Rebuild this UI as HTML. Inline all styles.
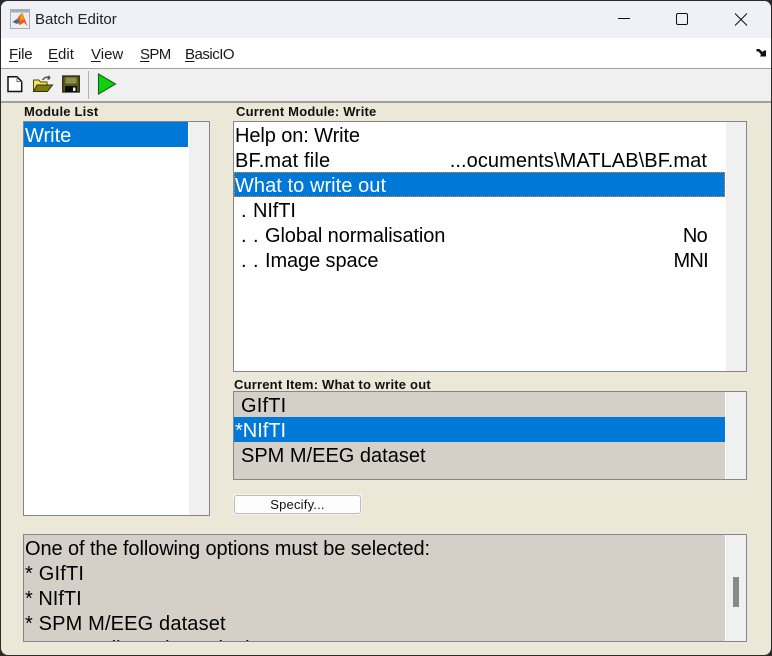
<!DOCTYPE html>
<html><head><meta charset="utf-8"><style>
html,body{margin:0;padding:0;background:#2b2b2b}
#w{position:relative;width:772px;height:656px;overflow:hidden;background:#2b2b2b;font-family:"Liberation Sans",sans-serif}
#i{position:absolute;left:1px;top:1px;width:770px;height:654px;border-radius:7px;overflow:hidden;background:#ebe8d8}
.a{position:absolute}
.t{position:absolute;white-space:pre;font-size:20px;line-height:25px;color:#000}
.m{position:absolute;white-space:pre;font-size:15px;line-height:20px;color:#1a1a1a}
.m u{text-decoration-thickness:1px;text-underline-offset:2px}
.l{position:absolute;white-space:pre;font-size:13px;font-weight:bold;line-height:15px;color:#111}
.b{position:absolute;box-sizing:border-box;border:1px solid #85858f}
</style></head><body><div id="w"><div id="i">
<div class="a" style="left:-1px;top:-1px;width:772px;height:39px;background:#eff1f7"></div>
<div class="a" style="left:-1px;top:37px;width:772px;height:30px;background:#fff"></div>
<div class="a" style="left:-1px;top:67px;width:772px;height:1px;background:#a0a0a0"></div>
<div class="a" style="left:-1px;top:68px;width:772px;height:32px;background:#f0f0f0"></div>
<div class="a" style="left:-1px;top:100px;width:772px;height:2px;background:#a0a0a0"></div>
</div>
<!-- title -->
<svg class="a" style="left:10px;top:9px" width="20" height="20" viewBox="0 0 20 20">
<rect x="0.5" y="0.5" width="19" height="19" fill="#eceef2" stroke="#a9adb5"/>
<rect x="1" y="1" width="18" height="2.5" fill="#9fb0c4"/>
<path d="M2.5 13 L7 10 L10.5 5 L12.5 4 L17.5 17 L14 13.5 L10 16 L7 13.5 Z" fill="#e2611c"/>
<path d="M2.5 13 L7 10 L9.5 12 L7 15 Z" fill="#2f6fa8"/>
<path d="M10.5 5 L12.5 4 L14.5 10 L10 12 Z" fill="#f09a22"/>
</svg>
<div class="a" style="left:35px;top:10px;font-size:15px;line-height:20px;color:#222;white-space:pre">Batch Editor</div>
<div class="a" style="left:618px;top:18px;width:12px;height:1px;background:#111"></div>
<div class="a" style="left:676px;top:13px;width:12px;height:12px;box-sizing:border-box;border:1px solid #111;border-radius:2px"></div>
<svg class="a" style="left:734px;top:13px" width="14" height="13" viewBox="0 0 14 13"><path d="M1 0.5 L13 12.5 M13 0.5 L1 12.5" stroke="#111" stroke-width="1" fill="none"/></svg>
<!-- menu -->
<div class="m" style="left:9px;top:45px;letter-spacing:-.2px"><u>F</u>ile</div>
<div class="m" style="left:48px;top:45px"><u>E</u>dit</div>
<div class="m" style="left:91px;top:45px"><u>V</u>iew</div>
<div class="m" style="left:140px;top:45px;letter-spacing:-.6px"><u>S</u>PM</div>
<div class="m" style="left:185px;top:45px;letter-spacing:-.5px"><u>B</u>asicIO</div>
<svg class="a" style="left:756px;top:48px" width="11" height="10" viewBox="0 0 11 10"><path d="M0.5 1 H3.5 L6.5 4 L8 2.5 L10 2.5 V8.5 H4 L5 6.5 L2.5 3.5 H0.5Z" fill="#111"/></svg>
<!-- toolbar -->
<svg class="a" style="left:6px;top:75px" width="18" height="18" viewBox="0 0 18 18"><path d="M2 1.8 H11 L15.7 6.5 V16.5 H2 Z" fill="#fff" stroke="#111" stroke-width="1.5"/><path d="M11 2 V6.5 H15.5" fill="none" stroke="#777"/></svg>
<svg class="a" style="left:32px;top:75px" width="22" height="18" viewBox="0 0 22 18"><path d="M1.5 5 H7 L8.5 7 H15 V16.5 H1.5 Z" fill="#f4e45c" stroke="#4a4a10"/><path d="M1.5 16.5 L5 10 H20.5 L15.5 16.5 Z" fill="#7e7a10" stroke="#33330a"/><path d="M10.5 5 Q14 0.5 18 3 M18 3 L16.5 0.8 M18 3 L15.5 4.5" stroke="#555" stroke-width="1.5" fill="none"/></svg>
<svg class="a" style="left:62px;top:75px" width="18" height="18" viewBox="0 0 18 18"><rect x="0.7" y="1" width="16.6" height="16" fill="#5a5a16" stroke="#2a2a10" stroke-width="1.3"/><rect x="3.5" y="2.5" width="11" height="6" fill="#8e8e50"/><rect x="3" y="11" width="12" height="6" fill="#0c0c0c"/><rect x="11" y="12.5" width="2.5" height="3.5" fill="#eee"/></svg>
<div class="a" style="left:88px;top:71px;width:1px;height:28px;background:#b0b0b0"></div>
<svg class="a" style="left:97px;top:73px" width="20" height="22" viewBox="0 0 20 22"><path d="M1.5 1 L18.5 11 L1.5 21 Z" fill="#0fd20f" stroke="#146414" stroke-width="1.1"/></svg>
<!-- labels -->
<div class="l" style="left:24px;top:104px;letter-spacing:.2px">Module List</div>
<div class="l" style="left:236px;top:104px;letter-spacing:.2px">Current Module: Write</div>
<div class="l" style="left:234px;top:377px;letter-spacing:.2px">Current Item: What to write out</div>
<!-- module list -->
<div class="b" style="left:23px;top:121px;width:187px;height:395px;background:#fff"></div>
<div class="a" style="left:189px;top:122px;width:20px;height:393px;background:#f0f0f0"></div>
<div class="a" style="left:24px;top:122px;width:164px;height:25px;background:#0078d7"></div>
<div class="t" style="left:25px;top:124px;color:#fff">Write</div>
<!-- current module -->
<div class="b" style="left:233px;top:121px;width:514px;height:251px;background:#fff"></div>
<div class="a" style="left:726px;top:122px;width:20px;height:249px;background:#f0f0f0"></div>
<div class="a" style="left:234px;top:172px;width:491px;height:25px;box-sizing:border-box;background:#0078d7;border:1px dotted #f08a20"></div>
<div class="t" style="left:235px;top:124px;letter-spacing:-.1px">Help on: Write</div>
<div class="t" style="left:235px;top:149px;letter-spacing:.18px">BF.mat file</div>
<div class="t" style="right:65px;top:149px;letter-spacing:.08px">...ocuments\MATLAB\BF.mat</div>
<div class="t" style="left:235px;top:174px;color:#fff;letter-spacing:.06px">What to write out</div>
<div class="t" style="left:241px;top:199px">.</div>
<div class="t" style="left:253px;top:199px;letter-spacing:-.1px">NIfTI</div>
<div class="t" style="left:241px;top:224px">.</div>
<div class="t" style="left:253px;top:224px">.</div>
<div class="t" style="left:265px;top:224px;letter-spacing:-.1px">Global normalisation</div>
<div class="t" style="right:65px;top:224px;letter-spacing:-.7px">No</div>
<div class="t" style="left:241px;top:249px">.</div>
<div class="t" style="left:253px;top:249px">.</div>
<div class="t" style="left:265px;top:249px;letter-spacing:-.1px">Image space</div>
<div class="t" style="right:64px;top:249px;letter-spacing:-.7px">MNI</div>
<!-- current item -->
<div class="b" style="left:233px;top:391px;width:514px;height:89px;background:#d4d0c8"></div>
<div class="a" style="left:725px;top:392px;width:21px;height:87px;background:#f0f0f0;border-left:1px solid #fff;box-sizing:border-box"></div>
<div class="a" style="left:234px;top:417px;width:491px;height:25px;background:#0078d7"></div>
<div class="t" style="left:241px;top:394px;letter-spacing:.2px">GIfTI</div>
<div class="t" style="left:235px;top:419px;color:#fff">*NIfTI</div>
<div class="t" style="left:241px;top:444px">SPM M/EEG dataset</div>
<!-- button -->
<div class="a" style="left:233px;top:494px;width:129px;height:21px;background:#f3f2ea"></div>
<div class="a" style="left:234px;top:495px;width:127px;height:19px;box-sizing:border-box;background:#fdfdfd;border:1px solid #bdbdbd;border-radius:3px;font-size:13px;line-height:18px;text-align:center;color:#111;letter-spacing:.2px">Specify...</div>
<!-- help -->
<div class="b" style="left:23px;top:534px;width:724px;height:108px;background:#d4d0c8;overflow:hidden">
<div class="t" style="left:1px;top:2px;letter-spacing:-.09px">One of the following options must be selected:</div>
<div class="t" style="left:1px;top:27px;letter-spacing:.2px">* GIfTI</div>
<div class="t" style="left:1px;top:52px">* NIfTI</div>
<div class="t" style="left:1px;top:77px;letter-spacing:.15px">* SPM M/EEG dataset</div>
<div class="t" style="left:1px;top:102px">Save gradient planes in the</div>
</div>
<div class="a" style="left:725px;top:535px;width:21px;height:106px;background:#f0f0f0;border-left:1px solid #fff;box-sizing:border-box"></div>
<div class="a" style="left:733px;top:577px;width:6px;height:30px;background:#8a8a8a"></div>
</div></body></html>
